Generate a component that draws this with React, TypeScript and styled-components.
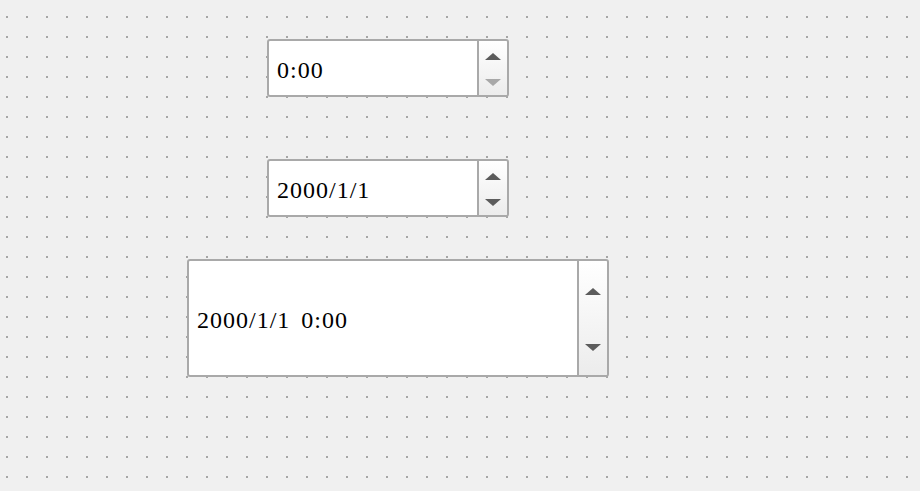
import React from 'react';
import { createGlobalStyle, styled } from 'styled-components';

const dots =
  "data:image/svg+xml,%3Csvg xmlns='http://www.w3.org/2000/svg' width='20' height='20'%3E%3Crect x='6' y='16' width='2' height='2' fill='%23a6a6a6'/%3E%3C/svg%3E";

const GlobalStyle = createGlobalStyle`
  html, body {
    margin: 0;
    padding: 0;
    background: #f0f0f0;
  }
`;

const Canvas = styled.div`
  width: 920px;
  height: 491px;
  background-color: #f0f0f0;
  background-image: url("${dots}");
  background-size: 20px 20px;
  display: flex;
  flex-direction: column;
  align-items: flex-start;
  padding-top: 39px;
  box-sizing: border-box;
  overflow: hidden;
`;

const Spinner = styled.div<{ $left: number; $width: number; $height: number; $gap: number }>`
  margin-left: ${(p) => p.$left}px;
  margin-bottom: ${(p) => p.$gap}px;
  width: ${(p) => p.$width}px;
  height: ${(p) => p.$height}px;
  box-sizing: border-box;
  border: 2px solid #a9a9a9;
  border-radius: 3px;
  background: #ffffff;
  display: flex;
`;

const Field = styled.div`
  flex: 1;
  display: flex;
  align-items: center;
  padding: 4px 0 0 8px;
  font-family: 'Liberation Serif', 'DejaVu Serif', serif;
  font-size: 24px;
  letter-spacing: 1px;
  word-spacing: 4px;
  color: #000;
  white-space: pre;
`;

const Buttons = styled.div`
  width: 28px;
  border-left: 2px solid #a9a9a9;
  background: linear-gradient(#ffffff, #ececec);
  border-radius: 0 2px 2px 0;
  display: flex;
  flex-direction: column;
`;

const Half = styled.div<{ $shift: number }>`
  flex: 1;
  display: flex;
  align-items: center;
  justify-content: center;
  padding-top: ${(p) => p.$shift}px;
`;

const Arrow = styled.span<{ $down?: boolean; $disabled?: boolean }>`
  width: 0;
  height: 0;
  border-left: 8px solid transparent;
  border-right: 8px solid transparent;
  ${(p) =>
    p.$down
      ? `border-top: 7px solid ${p.$disabled ? '#a8a8a8' : '#5c5c5c'};`
      : `border-bottom: 7px solid ${p.$disabled ? '#a8a8a8' : '#5c5c5c'};`}
`;

type BoxProps = {
  value: string;
  left: number;
  width: number;
  height: number;
  gap: number;
  downDisabled?: boolean;
};

const SpinBox = ({ value, left, width, height, gap, downDisabled }: BoxProps) => (
  <Spinner $left={left} $width={width} $height={height} $gap={gap}>
    <Field>{value}</Field>
    <Buttons>
      <Half $shift={3}>
        <Arrow />
      </Half>
      <Half $shift={1}>
        <Arrow $down $disabled={downDisabled} />
      </Half>
    </Buttons>
  </Spinner>
);

const App = () => (
  <>
    <GlobalStyle />
    <Canvas>
      <SpinBox value="0:00" left={267} width={242} height={58} gap={62} downDisabled />
      <SpinBox value="2000/1/1" left={267} width={242} height={58} gap={42} />
      <SpinBox value="2000/1/1 0:00" left={187} width={422} height={118} gap={0} />
    </Canvas>
  </>
);

export default App;
